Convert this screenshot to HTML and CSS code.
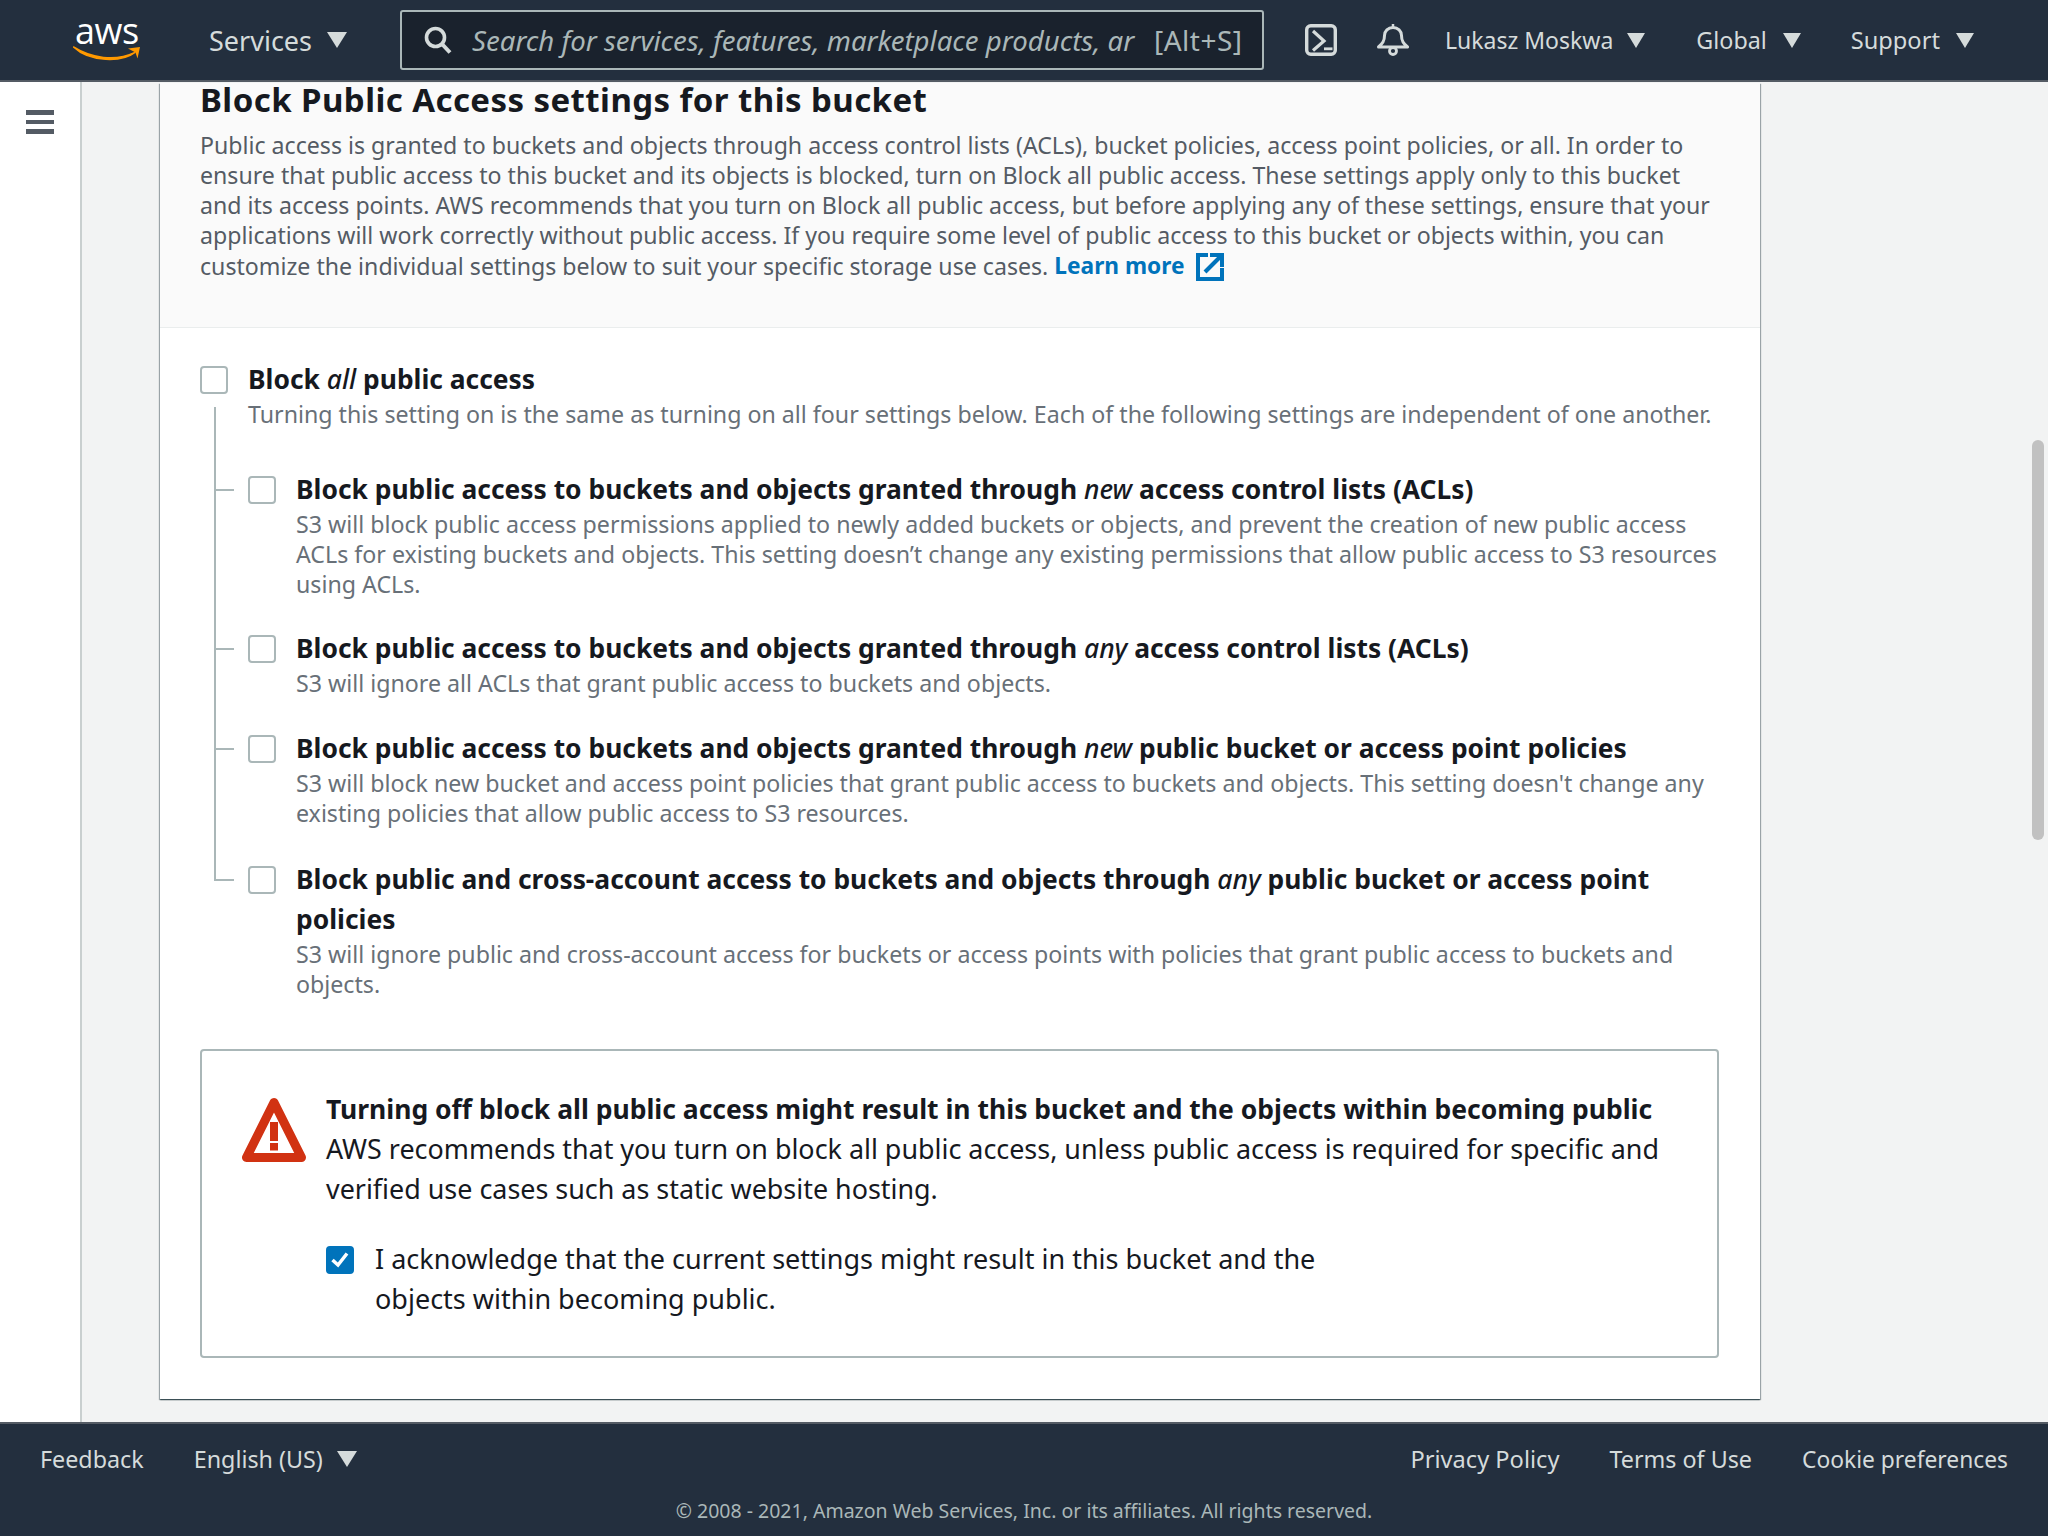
FILE: index.html
```html
<!DOCTYPE html>
<html lang="en">
<head>
<meta charset="utf-8">
<title>Block Public Access settings</title>
<link rel="stylesheet" href="styles.css">
</head>
<body>
<div class="app">
  <header class="topbar">
    <div class="logo">
      <span class="logo-text">aws</span>
      <svg class="logo-smile" width="68" height="16" viewBox="0 0 68 16"><path d="M0.500 1C18 12 42 16 62 6.500C50 16 17 17 0.500 1z" fill="#f90" stroke="#f90" stroke-width="1.500" stroke-linejoin="round"/><path d="M55 2.500 67 1 64.500 12.500 62.500 6.500z" fill="#f90"/></svg>
    </div>
    <div class="menu services"><span>Services</span><i class="tri"></i></div>
    <div class="search">
      <svg class="search-icon" width="28" height="28" viewBox="0 0 28 28"><circle cx="11.500" cy="11.500" r="9" fill="none" stroke="#d5dbdb" stroke-width="3.600"/><path d="M18 18l8 8.500" stroke="#d5dbdb" stroke-width="4" fill="none"/></svg>
      <span class="search-text">Search for services, features, marketplace products, ar</span>
      <span class="search-key">[Alt+S]</span>
    </div>
    <svg class="shell" width="32" height="32" viewBox="0 0 32 32"><rect x="1.700" y="1.700" width="28.600" height="28.600" rx="4" fill="none" stroke="#d5dbdb" stroke-width="3.400"/><path d="M8 7l11 10-11 9.500" fill="none" stroke="#d5dbdb" stroke-width="3.200"/><path d="M19 24.800h8.500" stroke="#d5dbdb" stroke-width="2.800"/></svg>
    <svg class="bell" width="32" height="32" viewBox="0 0 32 32"><path d="M1.500 23c4-3.500 6-6 6-11.500C7.500 7 11 3.500 16 3.500S24.500 7 24.500 11.500C24.500 17 26.500 19.500 30.500 23z" fill="none" stroke="#d5dbdb" stroke-width="3" stroke-linejoin="round"/><path d="M16 0v4" stroke="#d5dbdb" stroke-width="2.500"/><circle cx="16" cy="27" r="3.500" fill="none" stroke="#d5dbdb" stroke-width="2.800"/></svg>
    <div class="menu user"><span>Lukasz Moskwa</span><i class="tri"></i></div>
    <div class="menu global"><span>Global</span><i class="tri"></i></div>
    <div class="menu support"><span>Support</span><i class="tri"></i></div>
  </header>

  <div class="middle">
    <nav class="sidenav">
      <div class="burger"><i></i><i></i><i></i></div>
    </nav>
    <main class="content">
      <section class="card">
        <div class="card-head">
          <h2 class="card-title">Block Public Access settings for this bucket</h2>
          <p class="card-desc">Public access is granted to buckets and objects through access control lists (ACLs), bucket policies, access point policies, or all. In order to<br>ensure that public access to this bucket and its objects is blocked, turn on Block all public access. These settings apply only to this bucket<br>and its access points. AWS recommends that you turn on Block all public access, but before applying any of these settings, ensure that your<br>applications will work correctly without public access. If you require some level of public access to this bucket or objects within, you can</p>
          <p class="card-desc last"><span>customize the individual settings below to suit your specific storage use cases. </span><a class="learn" href="#">Learn more</a>
            <svg class="ext" width="28" height="28" viewBox="0 0 28 28"><path d="M12 2H2v24h24V15" fill="none" stroke="#0073bb" stroke-width="4"/><path d="M9 19 25 3" stroke="#0073bb" stroke-width="4" fill="none"/><path d="M14 2h12v12" fill="none" stroke="#0073bb" stroke-width="4"/></svg>
          </p>
        </div>
        <div class="card-body">
          <div class="group">
            <div class="opt">
              <span class="check"></span>
              <div class="opt-text">
                <div class="opt-title">Block <em>all</em> public access</div>
                <div class="opt-desc">Turning this setting on is the same as turning on all four settings below. Each of the following settings are independent of one another.</div>
              </div>
            </div>
            <div class="tree">
              <div class="opt child c1">
                <span class="check"></span>
                <div class="opt-text">
                  <div class="opt-title">Block public access to buckets and objects granted through <em>new</em> access control lists (ACLs)</div>
                  <div class="opt-desc">S3 will block public access permissions applied to newly added buckets or objects, and prevent the creation of new public access<br>ACLs for existing buckets and objects. This setting doesn’t change any existing permissions that allow public access to S3 resources<br>using ACLs.</div>
                </div>
              </div>
              <div class="opt child c2">
                <span class="check"></span>
                <div class="opt-text">
                  <div class="opt-title">Block public access to buckets and objects granted through <em>any</em> access control lists (ACLs)</div>
                  <div class="opt-desc">S3 will ignore all ACLs that grant public access to buckets and objects.</div>
                </div>
              </div>
              <div class="opt child c3">
                <span class="check"></span>
                <div class="opt-text">
                  <div class="opt-title">Block public access to buckets and objects granted through <em>new</em> public bucket or access point policies</div>
                  <div class="opt-desc">S3 will block new bucket and access point policies that grant public access to buckets and objects. This setting doesn't change any<br>existing policies that allow public access to S3 resources.</div>
                </div>
              </div>
              <div class="opt child c4">
                <span class="check"></span>
                <div class="opt-text">
                  <div class="opt-title">Block public and cross-account access to buckets and objects through <em>any</em> public bucket or access point<br>policies</div>
                  <div class="opt-desc">S3 will ignore public and cross-account access for buckets or access points with policies that grant public access to buckets and<br>objects.</div>
                </div>
              </div>
            </div>
          </div>
          <div class="alert">
            <svg class="warn" width="64" height="66" viewBox="0 0 64 66"><path d="M32 5.500 4.500 60.500h55z" fill="none" stroke="#d13212" stroke-width="9" stroke-linejoin="round"/><rect x="28" y="25" width="8" height="19" fill="#d13212"/><rect x="28" y="46" width="8" height="7.500" fill="#d13212"/></svg>
            <div class="alert-main">
              <div class="alert-title">Turning off block all public access might result in this bucket and the objects within becoming public</div>
              <div class="alert-text">AWS recommends that you turn on block all public access, unless public access is required for specific and<br>verified use cases such as static website hosting.</div>
              <div class="ack">
                <span class="check checked"><svg width="20" height="20" viewBox="0 0 20 20"><path d="M2.500 10l5.500 5 9-11.500" fill="none" stroke="#fff" stroke-width="3.500"/></svg></span>
                <div class="ack-text">I acknowledge that the current settings might result in this bucket and the<br>objects within becoming public.</div>
              </div>
            </div>
          </div>
        </div>
      </section>
    </main>
    <div class="thumb"></div>
  </div>

  <footer class="footer">
    <div class="foot-row">
      <span class="foot-link">Feedback</span>
      <div class="menu lang"><span>English (US)</span><i class="tri"></i></div>
      <span class="foot-spacer"></span>
      <span class="foot-link privacy">Privacy Policy</span>
      <span class="foot-link">Terms of Use</span>
      <span class="foot-link cookie">Cookie preferences</span>
    </div>
    <div class="copy">© 2008 - 2021, Amazon Web Services, Inc. or its affiliates. All rights reserved.</div>
  </footer>
</div>
</body>
</html>
```
FILE: styles.css
```css
* { box-sizing: border-box; }
html, body { margin: 0; height: 100%; }
body { font-family: "Noto Sans", "Open Sans", sans-serif; color: #16191f; background: #f2f3f3; }
.app { display: flex; flex-direction: column; height: 100vh; overflow: hidden; }

.topbar { flex: none; height: 82px; background: #232f3e; border-bottom: 2px solid #545b64; display: flex; align-items: center; color: #d5dbdb; font-size: 27px; padding-left: 73px; position: relative; z-index: 1; }
.logo { width: 68px; height: 42px; position: relative; flex: none; }
.logo-text { position: absolute; left: 2px; top: -12px; font-size: 36px; line-height: 48px; color: #fff; font-family: "Open Sans", sans-serif; letter-spacing: -0.5px; }
.logo-smile { position: absolute; left: 0; top: 27px; }
.menu { display: flex; align-items: center; flex: none; }
.tri { display: block; width: 0; height: 0; border-left: 10px solid transparent; border-right: 10px solid transparent; border-top: 16px solid #d5dbdb; }
.services { margin-left: 68px; width: 191px; gap: 15px; }
.search { width: 864px; height: 60px; flex: none; border: 2px solid #aab7b8; border-radius: 3px; background: #1a222d; display: flex; align-items: center; padding-left: 22px; }
.search-icon { flex: none; }
.search-text { margin-left: 20px; width: 664px; white-space: nowrap; overflow: hidden; font-style: italic; color: #aab7b8; font-size: 27.600px; }
.search-key { margin-left: 18px; color: #aab7b8; font-size: 28px; letter-spacing: .5px; white-space: nowrap; }
.shell { flex: none; margin-left: 41px; }
.bell { flex: none; margin-left: 40px; }
.user { margin-left: 36px; gap: 14px; font-size: 23px; }
.global { margin-left: 51px; gap: 16px; font-size: 23.300px; }
.support { margin-left: 50px; gap: 16px; font-size: 23.600px; }
.user .tri, .global .tri, .support .tri { border-left-width: 9.500px; border-right-width: 9.500px; border-top-width: 15px; }

.middle { flex: 1; min-height: 0; display: flex; position: relative; }
.sidenav { flex: none; width: 82px; background: #fff; border-right: 2px solid #c9cfcf; padding: 28px 0 0 26px; }
.burger { width: 28px; display: flex; flex-direction: column; gap: 5px; }
.burger i { display: block; height: 4.700px; background: #545b64; }
.content { flex: 1; min-width: 0; padding: 1px 0 0 78px; }
.thumb { position: absolute; left: 2032px; top: 358px; width: 12px; height: 400px; border-radius: 6px; background: #c1c1c1; }

.card { width: 1600px; background: #fff; padding-bottom: 41px; box-shadow: 0 1px 1px 0 rgba(0,28,36,.5), 1px 1px 1px 0 rgba(0,28,36,.3), -1px 1px 1px 0 rgba(0,28,36,.3); }
.card-head { background: #fafafa; border-bottom: 1px solid #eaeded; height: 245px; padding: 1px 41px 0 40px; }
.card-title { margin: 0; font-size: 33px; line-height: 32px; font-weight: 700; letter-spacing: .43px; }
.card-desc { margin: 14px 0 0; font-size: 23.150px; line-height: 30px; color: #545b64; white-space: nowrap; }
.card-desc.last { margin-top: 1px; display: flex; align-items: center; white-space: pre; }
.learn { color: #0073bb; font-weight: 700; font-size: 22.700px; text-decoration: none; }
.ext { margin: 2px 0 0 12px; flex: none; }
.card-body { padding: 38px 41px 0 40px; }

.group { position: relative; }
.group::before { content: ""; position: absolute; left: 14px; top: 41px; height: 474px; width: 2px; background: #aab7b8; }
.opt { display: flex; }
.check { flex: none; display: block; width: 28px; height: 28px; border: 2px solid #aab7b8; border-radius: 4px; background: #fff; }
.check.checked { background: #0073bb; border-color: #0073bb; display: flex; align-items: center; justify-content: center; }
.opt-text { margin-left: 20px; min-width: 0; }
.opt-title { font-size: 26.400px; line-height: 40px; font-weight: 700; margin-top: -7px; white-space: nowrap; }
.opt-title em { font-weight: 500; }
.opt-desc { font-size: 23.200px; line-height: 30px; color: #687078; white-space: nowrap; }
.tree { padding-left: 48px; }
.child { position: relative; }
.child.c1 { margin-top: 47px; }
.child.c2 { margin-top: 36px; }
.child.c3 { margin-top: 37px; }
.child.c4 { margin-top: 38px; }
.child::before { content: ""; position: absolute; left: -33px; top: 13px; width: 19px; height: 2px; background: #aab7b8; }

.alert { margin-top: 50px; height: 309px; border: 2px solid #aab7b8; border-radius: 4px; display: flex; padding: 46px 40px 0; background: #fff; }
.warn { flex: none; margin-right: 20px; }
.alert-main { flex: 1; }
.alert-title { font-size: 26.500px; line-height: 40px; font-weight: 700; margin-top: -8px; white-space: nowrap; }
.alert-text { font-size: 26.900px; line-height: 40px; white-space: nowrap; }
.ack { display: flex; margin-top: 37px; }
.ack-text { margin-left: 21px; font-size: 27px; line-height: 40px; margin-top: -7px; white-space: nowrap; }

.footer { flex: none; height: 114px; background: #232f3e; border-top: 2px solid #545b64; color: #d5dbdb; padding: 0 40px; }
.foot-row { display: flex; align-items: center; height: 70px; font-size: 23.300px; gap: 50px; }
.foot-spacer { flex: 1; }
.privacy { font-size: 23.600px; }
.cookie { font-size: 22.800px; }
.lang { gap: 14px; }
.copy { text-align: center; font-size: 19.500px; line-height: 28px; margin-top: 3px; color: #aab7b8; }
```
